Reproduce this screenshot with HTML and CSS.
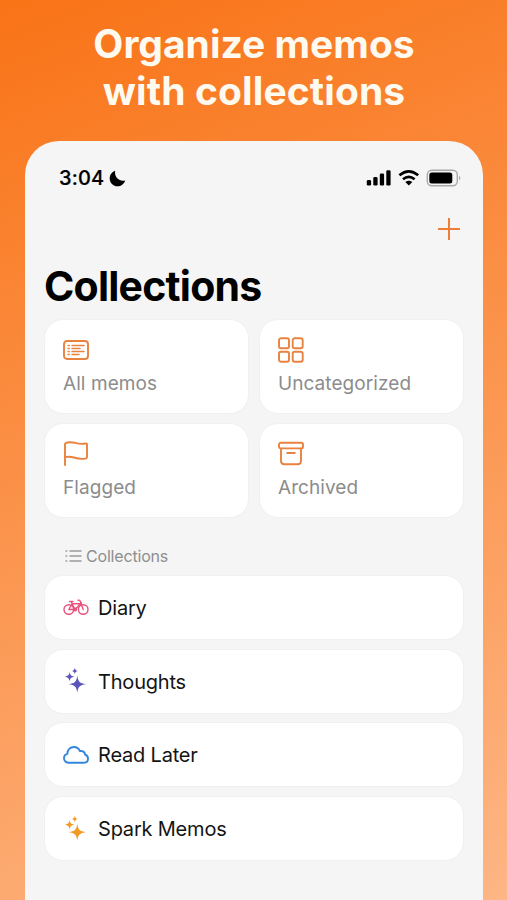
FILE: index.html
```html
<!DOCTYPE html>
<html lang="en">
<head>
<meta charset="utf-8">
<title>Collections</title>
<link rel="stylesheet" href="styles.css">
</head>
<body>
<main class="poster">
  <h1 class="headline"><span>Organize memos</span><br><span class="l2">with collections</span></h1>
  <section class="phone">
    <header class="status">
      <span class="time">3:04</span>
      <svg class="moon" width="17" height="17" viewBox="0 0 17 17"><path d="M6.200.8C5 6.200 9.300 12 16.300 10.500C15 14 12 16.300 8.600 16.300C4.200 16.300.7 12.900.7 8.500C.7 5 2.900 2 6.200.8Z"/></svg>
      <svg class="indicators" width="96" height="18" viewBox="0 0 96 18">
        <rect x=".8" y="11" width="4.300" height="5.500" rx="1.300"/><rect x="7.300" y="8" width="4.300" height="8.500" rx="1.300"/><rect x="13.800" y="4.500" width="4.300" height="12" rx="1.300"/><rect x="20.300" y="1.300" width="4.300" height="15.200" rx="1.300"/>
        <path class="arc" d="M33.400 6.300Q42.800-1.600 52.200 6.300M37 10.200Q42.800 5.400 48.600 10.200"/>
        <path d="M39.300 13Q42.800 10.300 46.300 13L42.800 16.600Z"/>
        <rect class="shell" x="61.300" y="1.300" width="30" height="15.400" rx="4.500"/>
        <rect x="63.300" y="3.400" width="23" height="11.200" rx="2.500"/>
        <path class="cap" d="M93 6.500Q95.700 9 93 11.500Z"/>
      </svg>
    </header>
    <div class="toolbar"><svg width="22" height="22" viewBox="0 0 22 22"><path d="M11 .7V21.300M.7 11H21.300"/></svg></div>
    <h2 class="title">Collections</h2>
    <div class="tiles">
      <article class="tile">
        <svg class="ico" width="26" height="26" viewBox="0 0 26 26"><rect x="1" y="4" width="24" height="18" rx="3"/><path d="M9 8.500H21M9 11.500H17M9 14.500H21M9 17.500H16" stroke-width="1.500"/><path d="M5 8.500H6.300M5 11.500H6.300M5 14.500H6.300M5 17.500H6.300" stroke-width="1.300"/></svg>
        <span>All memos</span>
      </article>
      <article class="tile">
        <svg class="ico" width="26" height="26" viewBox="0 0 26 26"><rect x="1" y="1.300" width="10" height="10" rx="2"/><rect x="14.700" y="1.300" width="10" height="10" rx="2"/><rect x="1" y="14.700" width="10" height="10" rx="2"/><rect x="14.700" y="14.700" width="10" height="10" rx="2"/></svg>
        <span>Uncategorized</span>
      </article>
      <article class="tile">
        <svg class="ico" width="26" height="26" viewBox="0 0 26 26"><path d="M2 24V3Q2 2.300 3 1.800C11-.8 13 4.500 22.500 2.500Q24 2.200 24 3.500V16Q24 17 23 17.300C13 20 11 13.700 2 16.200"/></svg>
        <span>Flagged</span>
      </article>
      <article class="tile">
        <svg class="ico" width="26" height="26" viewBox="0 0 26 26"><rect x="1" y="1.800" width="24" height="5.600" rx="1.700"/><path d="M3 7.600V20Q3 23.300 6.500 23.300H19.500Q23 23.300 23 20V7.600M9.200 12H16.800"/></svg>
        <span>Archived</span>
      </article>
    </div>
    <div class="label">
      <svg width="17" height="14" viewBox="0 0 17 14"><path d="M4.500 2H16.500M4.500 7H16.500M4.500 12H16.500M.5 2H2.300M.5 7H2.300M.5 12H2.300"/></svg>
      <span>Collections</span>
    </div>
    <ul class="list">
      <li class="row">
        <svg class="bike" width="26" height="26" viewBox="0 0 26 26"><circle cx="5.800" cy="14.500" r="4.800"/><circle cx="20.200" cy="14.500" r="4.800"/><path d="M5.800 14.500L9 9L12.200 14.500H5.800M12.200 14.500L17.500 8.800H9L8.300 6.500M6.500 6.500H10M20.200 14.500L17 5.800Q16.700 5 15 5.200M17.500 8.800L18.500 7.500"/><circle class="hub" cx="12.200" cy="14.500" r="1.200"/></svg>
        <span>Diary</span>
      </li>
      <li class="row">
        <svg class="spark violet" width="26" height="26" viewBox="0 0 26 26"><path d="M14.300 7.800C15.200 13.900 16.700 15.300 23 16.200C16.700 17.100 15.200 18.500 14.300 24.600C13.400 18.500 11.900 17.100 5.600 16.200C11.900 15.300 13.400 13.900 14.300 7.800ZM6.600 4.100C7.200 7.200 8.100 8.100 11.200 8.700C8.100 9.300 7.200 10.200 6.600 13.300C6 10.200 5.100 9.300 2 8.700C5.100 8.100 6 7.200 6.600 4.100ZM11.800-.1C12.300 2 12.900 2.600 15 3C12.900 3.400 12.300 4 11.800 6.100C11.300 4 10.700 3.400 8.600 3C10.700 2.600 11.300 2 11.800-.1Z"/></svg>
        <span>Thoughts</span>
      </li>
      <li class="row">
        <svg class="cloud" width="26" height="26" viewBox="0 0 26 26"><path d="M6 20.800C3 20.800 1 18.800 1 16.200C1 14 2.300 12.300 4.400 11.800C4.200 7.800 7.300 5 10.800 5C14 5 16 6.700 17 9.200C19.600 8.500 21.900 10 22 12.500C24 13.200 25 14.800 25 16.700C25 19.100 23.200 20.800 20.700 20.800Z"/></svg>
        <span>Read Later</span>
      </li>
      <li class="row">
        <svg class="spark amber" width="26" height="26" viewBox="0 0 26 26"><path d="M14.300 7.800C15.200 13.900 16.700 15.300 23 16.200C16.700 17.100 15.200 18.500 14.300 24.600C13.400 18.500 11.900 17.100 5.600 16.200C11.900 15.300 13.400 13.900 14.300 7.800ZM6.600 4.100C7.200 7.200 8.100 8.100 11.200 8.700C8.100 9.300 7.200 10.200 6.600 13.300C6 10.200 5.100 9.300 2 8.700C5.100 8.100 6 7.200 6.600 4.100ZM11.800-.1C12.300 2 12.900 2.600 15 3C12.900 3.400 12.300 4 11.800 6.100C11.300 4 10.700 3.400 8.600 3C10.700 2.600 11.300 2 11.800-.1Z"/></svg>
        <span>Spark Memos</span>
      </li>
    </ul>
  </section>
</main>
</body>
</html>
```
FILE: styles.css
```css
* { box-sizing: border-box; margin: 0; padding: 0; }
body { font-family: Inter, "Liberation Sans", sans-serif; width: 507px; height: 900px; overflow: hidden; }
.poster { height: 900px; padding: 20px 24px 0 25px; background: linear-gradient(159deg, #f97316, #fdb685); overflow: hidden; }
.headline { height: 121px; color: #fffaf0; font-size: 39px; line-height: 47px; font-weight: 700; text-align: center; white-space: nowrap; }
.headline .l2 { letter-spacing: .12px; }
.phone { height: 779px; background: #f5f5f5; border-radius: 34px 34px 0 0; padding: 0 19px; }
.status { display: flex; align-items: center; height: 74px; padding: 0 2px 0 15px; }
.time { font-size: 20px; font-weight: 500; line-height: 24px; letter-spacing: .2px; -webkit-text-stroke: .2px #000; }
.moon { margin-left: 5px; }
.indicators { margin-left: auto; }
.indicators .arc { fill: none; stroke: #000; stroke-width: 2.700; }
.indicators .shell { fill: none; stroke: #aaa; stroke-width: 1.400; }
.indicators .cap { fill: #aaa; }
.toolbar { height: 47px; display: flex; justify-content: flex-end; padding: 3px 4px 0 0; }
.toolbar svg { fill: none; stroke: #ee7d38; stroke-width: 2; stroke-linecap: round; }
.title { height: 57px; font-size: 41px; line-height: 48px; font-weight: 700; letter-spacing: -.78px; white-space: nowrap; }
.tiles { display: grid; grid-template-columns: 205px 205px; grid-auto-rows: 95px; gap: 9px 10px; }
.tile { background: #fff; border: 1px solid #f0f0f0; border-radius: 19px; padding: 17px 18px 0; color: #8c8c8c; font-size: 19px; line-height: 24px; letter-spacing: .07px; }
.tile svg { display: block; margin-bottom: 9px; }
.tile span { white-space: nowrap; }
.ico { fill: none; stroke: #e9823f; stroke-width: 1.900; stroke-linecap: round; stroke-linejoin: round; }
.label { display: flex; align-items: center; gap: 4px; height: 57px; padding: 18px 21px 0; color: #8e8e8e; font-size: 16px; line-height: 20px; letter-spacing: -.18px; }
.label svg { fill: none; stroke: #999; stroke-width: 1.400; }
.list { list-style: none; display: grid; grid-auto-rows: 65px; gap: 8.700px; }
.row { display: flex; align-items: center; gap: 9px; padding: 0 18px; background: #fff; border: 1px solid #f0f0f0; border-radius: 19px; color: #141414; font-size: 20px; line-height: 24px; letter-spacing: -.2px; }
.row span { padding-top: 1px; }
.bike { fill: none; stroke: #e8527c; stroke-width: 1.400; stroke-linecap: round; }
.bike .hub { fill: #e8527c; }
.violet { fill: #5b55bd; }
.amber { fill: #f29a24; }
.cloud { fill: none; stroke: #3486dc; stroke-width: 1.900; stroke-linejoin: round; }
```
